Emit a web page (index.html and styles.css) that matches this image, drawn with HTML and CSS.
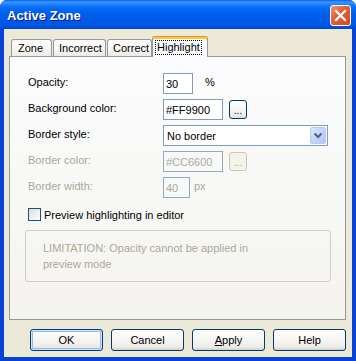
FILE: index.html
```html
<!DOCTYPE html>
<html lang="en">
<head>
    <meta charset="UTF-8">
    <title>Active Zone</title>
    <link rel="stylesheet" href="styles.css">
</head>
<body>
    <div class="window">
        <div class="titlebar">
            <span class="title">Active Zone</span>
            <span class="close">
                <svg width="19" height="19" viewBox="0 0 19 19">
                    <path d="M5 5 L14 14 M14 5 L5 14" stroke="#fff" stroke-width="2.2" stroke-linecap="square"/>
                </svg>
            </span>
        </div>
        <div class="client">
            <div class="tabs">
                <div class="tab tab-zone">Zone</div>
                <div class="tab tab-incorrect">Incorrect</div>
                <div class="tab tab-correct">Correct</div>
                <div class="tab selected"><span class="focus">Highlight</span></div>
            </div>
            <div class="panel">
                <div class="row">
                    <span class="label">Opacity:</span>
                    <input class="field w-opacity" type="text" value="30">
                    <span class="unit unit-pct">%</span>
                </div>
                <div class="row">
                    <span class="label">Background color:</span>
                    <input class="field w-color" type="text" value="#FF9900">
                    <span class="dots">...</span>
                </div>
                <div class="row">
                    <span class="label">Border style:</span>
                    <div class="combo">
                        <span class="combo-text">No border</span>
                        <span class="combo-btn">
                            <svg width="14" height="15" viewBox="0 0 14 15">
                                <path d="M3.5 5.5 L7 9 L10.5 5.5" stroke="#4D6185" stroke-width="2" fill="none"/>
                            </svg>
                        </span>
                    </div>
                </div>
                <div class="row disabled">
                    <span class="label">Border color:</span>
                    <input class="field w-color" type="text" value="#CC6600" disabled>
                    <span class="dots">...</span>
                </div>
                <div class="row disabled">
                    <span class="label">Border width:</span>
                    <input class="field w-width" type="text" value="40" disabled>
                    <span class="unit unit-px">px</span>
                </div>
                <div class="check-row">
                    <span class="checkbox"></span>
                    <span>Preview highlighting in editor</span>
                </div>
                <div class="note">
                    LIMITATION: Opacity cannot be applied in<br>
                    preview mode
                </div>
            </div>
            <div class="buttons">
                <button class="btn default">OK</button>
                <button class="btn">Cancel</button>
                <button class="btn"><u>A</u>pply</button>
                <button class="btn">Help</button>
            </div>
        </div>
    </div>
</body>
</html>
```

FILE: styles.css
```css
* {
    box-sizing: border-box;
}
body {
    margin: 0;
    padding: 0;
    background-color: #ffffff;
    font-family: "Liberation Sans", Arial, sans-serif;
    font-size: 11px;
}
.window {
    width: 356px;
    height: 361px;
    display: flex;
    flex-direction: column;
    background-color: #0842D6;
    border-radius: 7px 7px 0 0;
    overflow: hidden;
}
.titlebar {
    height: 29px;
    flex: none;
    display: flex;
    justify-content: space-between;
    align-items: flex-start;
    padding: 0 5px 0 7px;
    background: linear-gradient(to bottom, #0A5EEE 0%, #3D95FF 7%, #2A8BFF 12%, #0F78FC 20%, #0468F6 30%, #0060EE 45%, #005BE9 60%, #0058E6 75%, #0055E4 88%, #0047D2 100%);
}
.title {
    color: #ffffff;
    font-weight: bold;
    font-size: 13px;
    margin-top: 8px;
    text-shadow: 1px 1px 0 #0A1883;
}
.close {
    width: 21px;
    height: 21px;
    margin-top: 5px;
    border: 1px solid #ffffff;
    border-radius: 3px;
    background: linear-gradient(135deg, #F09878 0%, #E2623A 40%, #D2471E 100%);
    display: flex;
    align-items: center;
    justify-content: center;
}
.client {
    flex: 1;
    margin: 0 4px 4px 4px;
    padding: 7px 6px 6px 5px;
    background-color: #ECE9D8;
    display: flex;
    flex-direction: column;
}
.tabs {
    display: flex;
    align-items: flex-end;
    height: 20px;
    padding-left: 2px;
    position: relative;
    z-index: 1;
}
.tab {
    height: 17px;
    border: 1px solid #919B9C;
    border-bottom: none;
    border-radius: 3px 3px 0 0;
    background: linear-gradient(to bottom, #FFFFFF 0%, #F6F5F1 60%, #ECEBE5 100%);
    padding: 2px 0 0 6px;
    color: #000000;
    margin-right: 1px;
}
.tab-zone {
    width: 41px;
}
.tab-incorrect {
    width: 53px;
    padding-left: 5px;
}
.tab-correct {
    width: 45px;
    padding-left: 5px;
    margin-right: 0;
}
.tab.selected {
    width: 56px;
    height: 21px;
    margin-bottom: -1px;
    margin-right: 0;
    border-top: 1px solid #E68B2C;
    box-shadow: inset 0 2px 0 #FFC83C;
    background: #FCFCFE;
    padding: 3px 0 0 2px;
}
.focus {
    display: inline-block;
    border: 1px dotted #000000;
    padding: 0 1px 0 1px;
    line-height: 13px;
}
.panel {
    height: 264px;
    border: 1px solid #919B9C;
    background: linear-gradient(to bottom, #FCFCFE 0%, #F8F8F6 50%, #F4F3EE 100%);
    padding: 16px 0 0 18px;
}
.row {
    display: flex;
    align-items: center;
    height: 21px;
    margin-bottom: 5px;
}
.label {
    width: 135px;
    padding-bottom: 3px;
    color: #000000;
}
.field {
    height: 21px;
    border: 1px solid #7F9DB9;
    background: #ffffff;
    font-family: "Liberation Sans", Arial, sans-serif;
    font-size: 11px;
    color: #000000;
    padding: 0 0 0 2px;
    margin: 0;
    outline: none;
}
.w-opacity {
    width: 30px;
}
.w-color {
    width: 60px;
}
.w-width {
    width: 27px;
}
.unit {
    padding-bottom: 3px;
}
.unit-pct {
    margin-left: 12px;
}
.unit-px {
    margin-left: 4px;
}
.dots {
    width: 18px;
    height: 19px;
    margin-left: 6px;
    border: 1px solid #003C74;
    border-radius: 3px;
    background: linear-gradient(to bottom, #FFFFFF 0%, #F3F2EE 70%, #E3E0D6 100%);
    text-align: center;
    line-height: 19px;
    font-size: 10px;
    color: #000000;
}
.combo {
    width: 165px;
    height: 21px;
    border: 1px solid #7F9DB9;
    background: #ffffff;
    display: flex;
    align-items: center;
}
.combo-text {
    flex: 1;
    padding-left: 3px;
}
.combo-btn {
    width: 16px;
    height: 17px;
    margin: 1px;
    border: 1px solid #B9CBF3;
    border-radius: 2px;
    background: linear-gradient(135deg, #DCE6FC 0%, #C3D4FA 50%, #B1C6F6 100%);
    display: flex;
    align-items: center;
    justify-content: center;
}
.row.disabled .label,
.row.disabled .unit {
    color: #ACA899;
}
.row.disabled .field {
    background: transparent;
    color: #ACA899;
    border-color: #93AAC4;
}
.row.disabled .dots {
    border-color: #C9C7BA;
    color: #ACA899;
    background: #F5F4EA;
}
.check-row {
    display: flex;
    align-items: center;
    margin-top: 10px;
    height: 13px;
}
.checkbox {
    width: 13px;
    height: 13px;
    border: 1px solid #1C5180;
    background: linear-gradient(135deg, #DCDBD5 0%, #F2F1EC 60%, #FFFFFF 100%);
    margin-right: 3px;
}
.note {
    margin: 9px 0 0 -3px;
    width: 306px;
    height: 52px;
    border: 1px solid #D0D0BF;
    border-radius: 3px;
    padding: 9px 0 0 17px;
    line-height: 16px;
    color: #ACA899;
}
.buttons {
    display: flex;
    margin-top: 9px;
    padding-left: 21px;
    gap: 8px;
}
.btn {
    width: 73px;
    height: 22px;
    border: 1px solid #003C74;
    border-radius: 3px;
    background: linear-gradient(to bottom, #FFFFFF 0%, #F6F5F1 50%, #ECEBE6 85%, #D6D0C5 100%);
    font-family: "Liberation Sans", Arial, sans-serif;
    font-size: 11px;
    color: #000000;
    padding: 0;
}
.btn.default {
    box-shadow: inset 0 0 0 1px #CEE7FF, inset 0 0 0 2px #98B8EA;
}
```
